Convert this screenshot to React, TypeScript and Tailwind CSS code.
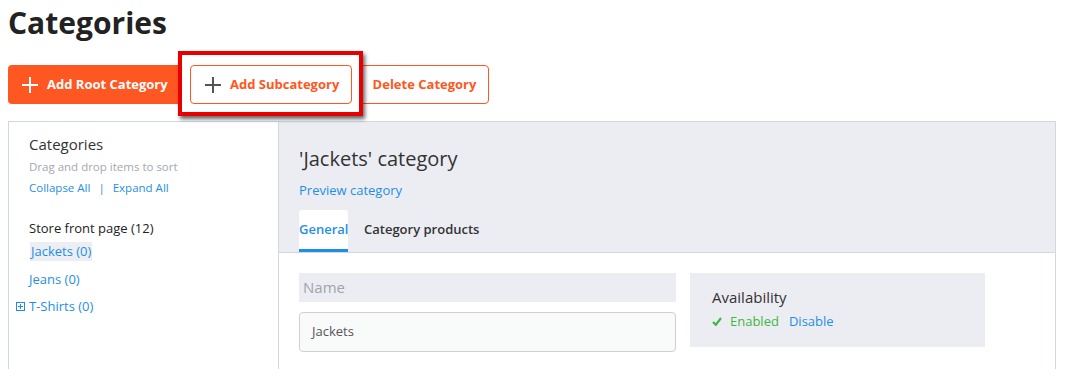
import React from 'react';

const font = { fontFamily: '"Open Sans", "Liberation Sans", sans-serif' };

function Plus({ className }: { className: string }) {
  return (
    <svg viewBox="0 0 16 16" className={className} fill="none" stroke="currentColor" strokeWidth="2">
      <path d="M8 0v16M0 8h16" />
    </svg>
  );
}

export default function App() {
  return (
    <div className="w-[1068px] h-[369px] overflow-hidden bg-white text-[#333]" style={font}>
      {/* Title */}
      <h1 className="pl-2 pt-[3px] text-[30px] font-bold leading-[40px] text-[#222]">Categories</h1>

      {/* Toolbar */}
      <div className="mt-[22px] ml-2 flex gap-2">
        <button className="h-[39px] w-[174px] rounded bg-[#fe5722] text-white text-[13px] font-bold flex items-center pl-[14px] gap-[9px]">
          <Plus className="w-4 h-4" />
          Add Root Category
        </button>
        <div className="relative">
          <button className="h-[39px] w-[162px] rounded border border-[#fe5722] bg-white text-[#fe5722] text-[13px] font-bold flex items-center pl-[14px] gap-[9px]">
            <Plus className="w-4 h-4 text-[#555]" />
            Add Subcategory
          </button>
          <span className="absolute -left-[12px] -right-[11px] -top-[14px] -bottom-[12px] border-4 border-[#e60000] shadow-[2px_3px_4px_rgba(0,0,0,0.6)] pointer-events-none" />
        </div>
        <button className="h-[39px] w-[129px] rounded border border-[#fe5722] bg-white text-[#fe5722] text-[13px] font-bold">
          Delete Category
        </button>
      </div>

      {/* Panel */}
      <div className="mt-[17px] ml-2 w-[1048px] h-[260px] border border-[#d3d8de] flex">
        {/* Left tree */}
        <div className="w-[270px] shrink-0 border-r border-[#d3d8de] pl-5 pt-[12px]">
          <div className="text-[15px] leading-[20px] text-[#333]">Categories</div>
          <div className="mt-[5px] text-[11.5px] leading-[16px] text-[#a2a8af]">Drag and drop items to sort</div>
          <div className="mt-[5px] text-[11.5px] leading-[16px] text-[#1e8fe6]">
            Collapse All <span className="mx-[5px]">|</span> Expand All
          </div>
          <div className="mt-[23px] text-[13px] leading-[18px] text-[#222]">Store front page (12)</div>
          <div className="mt-[5px] flex flex-col items-start gap-[8px] text-[13px] leading-[19px] text-[#1e8fe6]">
            <span className="ml-[1px] px-[1px] bg-[#eceef3]">Jackets (0)</span>
            <span className="mt-[1px]">Jeans (0)</span>
            <span className="relative">
              <span className="absolute -left-[13px] top-[5px] w-[9px] h-[9px] border border-[#1e8fe6] flex items-center justify-center">
                <svg viewBox="0 0 7 7" className="w-[7px] h-[7px]" stroke="#1e8fe6" strokeWidth="1">
                  <path d="M3.5 1v5M1 3.5h5" />
                </svg>
              </span>
              T-Shirts (0)
            </span>
          </div>
        </div>

        {/* Right detail */}
        <div className="flex-1 flex flex-col">
          <div className="bg-[#ecedf2] border-b border-[#d3d8de] pl-5 pt-[23px]">
            <div className="text-[20px] leading-[28px] text-[#333]">'Jackets' category</div>
            <div className="mt-[8px] text-[13px] leading-[18px] text-[#1e8fe6]">Preview category</div>
            <div className="mt-[11px] flex items-end gap-4 text-[13px] font-semibold">
              <div className="h-[42px] bg-white rounded-t-[3px] border-b-[3px] border-[#1e8fe6] text-[#1e8fe6] flex items-center w-[49px]">General</div>
              <div className="h-[42px] flex items-center text-[#333] pb-[3px]">Category products</div>
            </div>
          </div>
          <div className="pl-5 pt-5 flex gap-[14px]">
            <div className="w-[377px]">
              <div className="h-[29px] bg-[#ecedf2] pl-1 flex items-center text-[15px] text-[#9fa5ac]">Name</div>
              <div className="mt-[10px] h-[40px] rounded border border-[#cfcfcf] bg-[#f9fafa] pl-3 flex items-center text-[13px] text-[#555]">Jackets</div>
            </div>
            <div className="w-[295px] h-[74px] bg-[#ecedf2] pl-[22px] pt-[13px]">
              <div className="text-[15px] leading-[22px] text-[#333]">Availability</div>
              <div className="mt-[3px] text-[13px] leading-[20px] flex items-center gap-[10px]">
                <span className="flex items-center text-[#3db83f]">
                  <svg viewBox="0 0 10 9" className="w-[10px] h-[9px] mr-[8px]" fill="none" stroke="#3db83f" strokeWidth="2.2">
                    <path d="M1 5l2.8 2.8L9 1" />
                  </svg>
                  Enabled
                </span>
                <span className="text-[#1e8fe6]">Disable</span>
              </div>
            </div>
          </div>
        </div>
      </div>
    </div>
  );
}
